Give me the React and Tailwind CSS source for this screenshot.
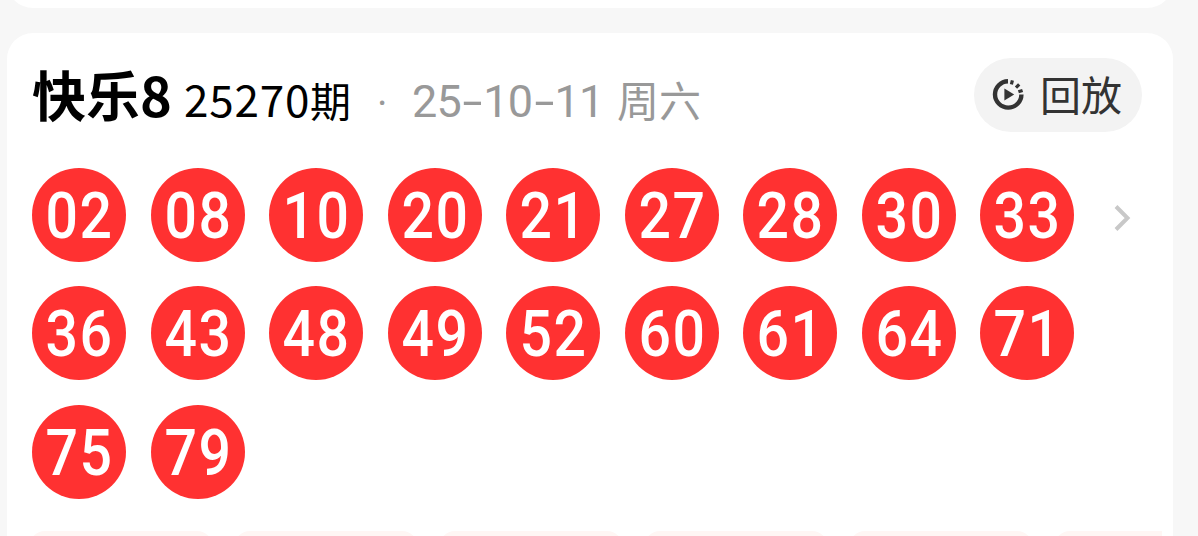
import React from "react";

const NUMBERS = [
  "02", "08", "10", "20", "21", "27", "28", "30", "33",
  "36", "43", "48", "49", "52", "60", "61", "64", "71",
  "75", "79",
];

function Ball({ value }) {
  return (
    <li className="flex size-[94px] items-center justify-center rounded-full bg-[#ff3131]">
      <span className="block scale-x-[0.88] pt-[2px] pl-[2px] font-['Roboto','Noto_Sans_CJK_SC',sans-serif] text-[65px] leading-[94px] font-medium tracking-[1.6px] text-white">
        {value}
      </span>
    </li>
  );
}

function ReplayIcon() {
  return (
    <svg className="h-8 w-8 shrink-0" viewBox="0 0 32 32" fill="none">
      <path d="M16 2.2A13.2 13.2 0 1 0 29.4 15.4" stroke="#333" strokeWidth="4.4" />
      <path
        d="M19.4 5.4 20.4 1.4M24 8.6 27.2 5.4M26.4 12.8 30.6 11.4"
        stroke="#333"
        strokeWidth="3.2"
      />
      <path d="M12.4 9.4 22.2 15.4l-9.8 6z" fill="#333" />
    </svg>
  );
}

function Dash() {
  return (
    <span className="inline-block w-[22.5px] text-center">
      <span className="inline-block scale-x-[1.6]">-</span>
    </span>
  );
}

export default function App() {
  return (
    <div className="flex h-[536px] w-full flex-col overflow-hidden bg-[#f7f7f7] pr-[25px] pl-[7px] font-['Roboto','Noto_Sans_CJK_SC',sans-serif]">
      <div className="-mt-[42px] h-[50px] shrink-0 rounded-b-[26px] bg-white" />
      <section className="mt-[25px] flex h-[540px] shrink-0 flex-col rounded-t-[26px] bg-white pt-[25px] pl-[25px]">
        <header className="flex h-[74px] items-center justify-between pr-[31px]">
          <div className="flex items-baseline pt-[7px] leading-[74px] whitespace-nowrap">
            <h1 className="w-[152px] font-['Noto_Sans_CJK_SC',sans-serif] text-[54px] leading-[74px] font-bold text-black">
              快乐8
            </h1>
            <span className="w-[126px] font-['Noto_Sans_CJK_SC',sans-serif] text-[44px] leading-[74px] tracking-[0.8px] text-black">
              25270
            </span>
            <span className="w-[67px] text-[41px] text-black">期</span>
            <span className="w-[35px] text-[40px] text-[#999]">·</span>
            <span className="w-[205px] text-[45px] tracking-[-0.9px] text-[#999]">
              25<Dash />10<Dash />11
            </span>
            <span className="text-[42px] text-[#999]">周六</span>
          </div>
          <button className="flex h-[74px] w-[168px] items-center rounded-full bg-[#f3f3f3] pl-[18px] text-[#333]">
            <ReplayIcon />
            <span className="ml-4 pt-[4px] text-[41px] leading-[74px]">回放</span>
          </button>
        </header>
        <div className="mt-[35.5px] flex">
          <ul className="grid grid-cols-[repeat(9,94px)] gap-x-[24.5px] gap-y-[24.5px]">
            {NUMBERS.map((n) => (
              <Ball key={n} value={n} />
            ))}
          </ul>
          <svg className="mt-[36px] ml-[39px] h-7 w-[19px]" viewBox="0 0 19 28" fill="none">
            <path d="m3 2.5 11.5 11.5L3 25.5" stroke="#c8c8c8" strokeWidth="4" />
          </svg>
        </div>
        <div className="mt-8 mr-[11px] -ml-[3px] grid grid-cols-[repeat(6,184px)] gap-x-[21px] overflow-hidden">
          {[0, 1, 2, 3, 4, 5].map((i) => (
            <div key={i} className="h-20 rounded-[16px] bg-[#fff6f4]" />
          ))}
        </div>
      </section>
    </div>
  );
}
